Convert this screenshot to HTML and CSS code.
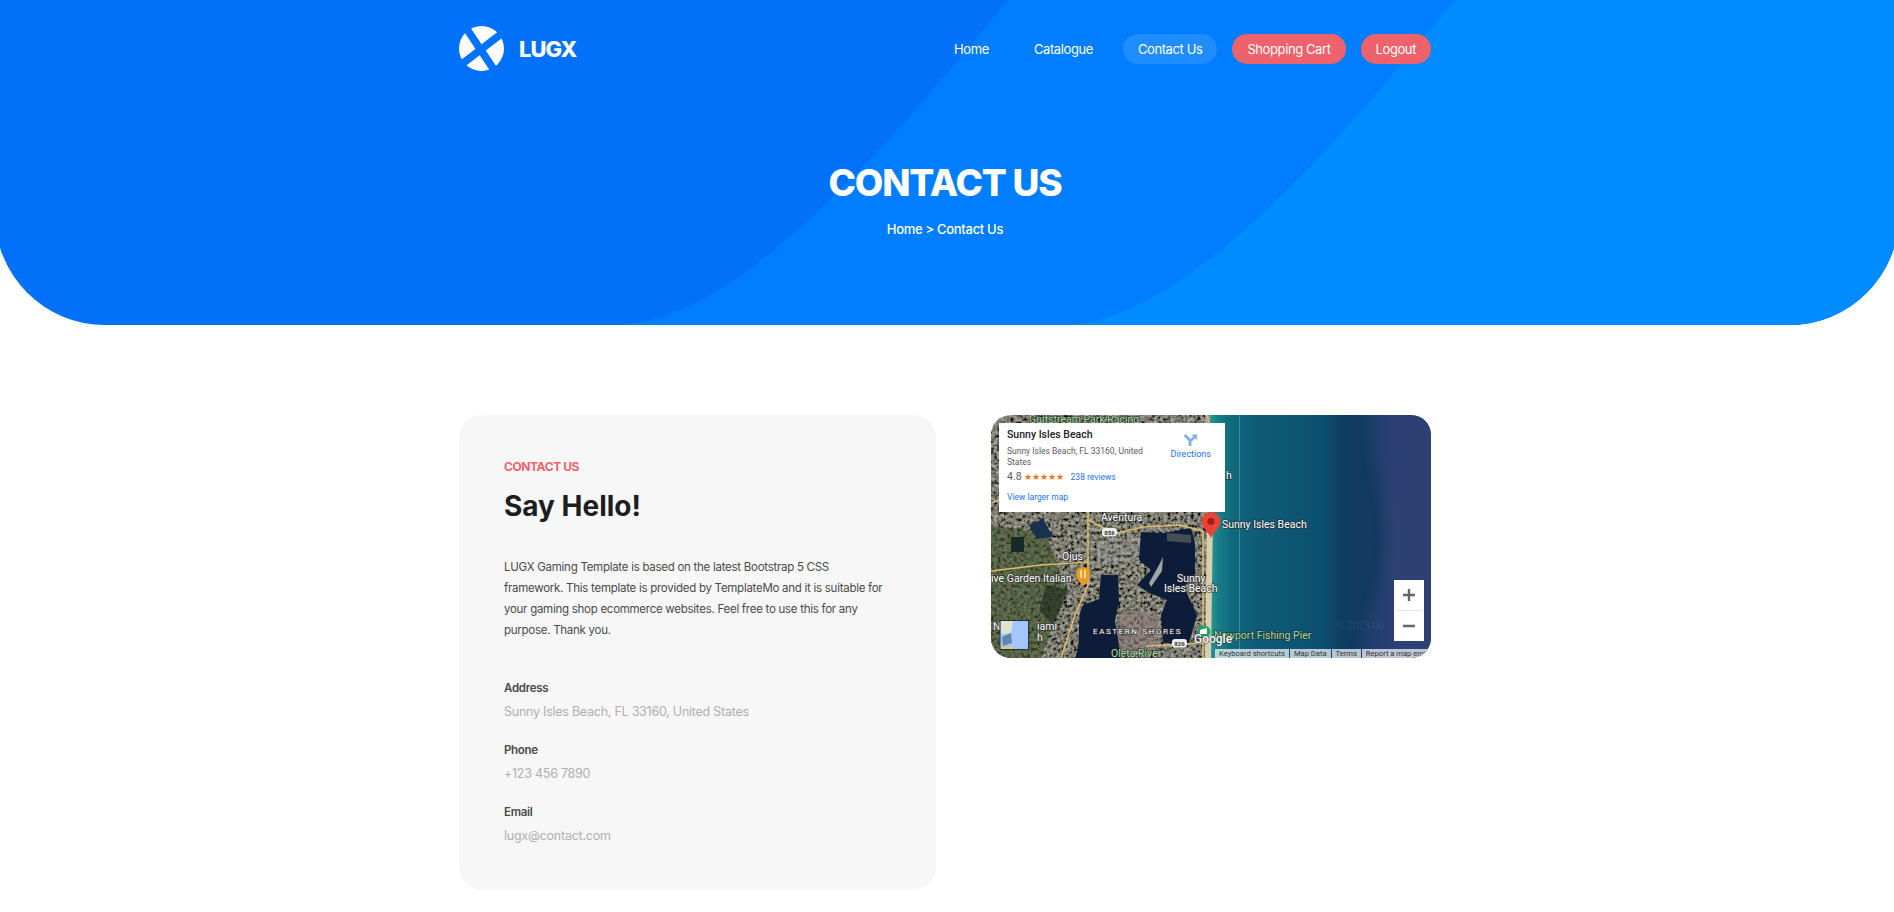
FILE: index.html
```html
<!DOCTYPE html>
<html lang="en">
<head>
    <meta charset="UTF-8">
    <meta name="viewport" content="width=device-width, initial-scale=1.0">
    <title>LUGX Gaming - Contact Us</title>
    <link rel="stylesheet" href="styles.css">
</head>
<body>

    <header class="hero">
        <!-- background swooshes -->
        <svg class="hero-shapes" viewBox="-5 0 1904 325" preserveAspectRatio="none" aria-hidden="true">
            <path fill="#007eff" d="M1008 0 C 924 100 748 325 616 325 L 1899 325 L 1899 0 Z"/>
            <path fill="#008cff" d="M1455 0 C 1371 100 1195 325 1063 325 L 1899 325 L 1899 0 Z"/>
        </svg>

        <div class="wrap">
            <nav class="topbar">
                <a class="logo" href="#">
                    <svg class="logo-mark" viewBox="0 0 44 44" aria-hidden="true">
                        <circle cx="22" cy="22" r="22" fill="#fff"/>
                        <path d="M5 -1 L 37 47 M 50 1 L -6 44" stroke="#0072fd" stroke-width="7.5" fill="none"/>
                    </svg>
                    <span class="logo-text">LUGX</span>
                </a>
                <ul class="menu">
                    <li><a href="#">Home</a></li>
                    <li><a href="#">Catalogue</a></li>
                    <li><a class="active" href="#">Contact Us</a></li>
                    <li><a class="red" href="#">Shopping Cart</a></li>
                    <li><a class="red" href="#">Logout</a></li>
                </ul>
            </nav>

            <div class="page-title">
                <h1>CONTACT US</h1>
                <p>Home &gt; Contact Us</p>
            </div>
        </div>
    </header>

    <main class="wrap contact">
        <section class="card">
            <h6>CONTACT US</h6>
            <h2>Say Hello!</h2>
            <p class="intro">LUGX Gaming Template is based on the latest Bootstrap 5 CSS framework. This template is provided by TemplateMo and it is suitable for your gaming shop ecommerce websites. Feel free to use this for any purpose. Thank you.</p>
            <ul class="details">
                <li><span>Address</span>Sunny Isles Beach, FL 33160, United States</li>
                <li><span>Phone</span>+123 456 7890</li>
                <li><span>Email</span>lugx@contact.com</li>
            </ul>
        </section>

        <section class="map">
            <svg class="map-art" viewBox="0 0 440 243" aria-hidden="true">
                <defs>
                    <linearGradient id="sea" x1="0" x2="1" y1="0" y2="0">
                        <stop offset="0" stop-color="#2a9d94"/>
                        <stop offset="0.04" stop-color="#178088"/>
                        <stop offset="0.1" stop-color="#0f6a7c"/>
                        <stop offset="0.2" stop-color="#0f5c78"/>
                        <stop offset="0.52" stop-color="#0c4f70"/>
                        <stop offset="0.6" stop-color="#0f3c60"/>
                        <stop offset="0.76" stop-color="#153a62"/>
                        <stop offset="0.84" stop-color="#2f4070"/>
                        <stop offset="1" stop-color="#373f6c"/>
                    </linearGradient>
                    <filter id="grain" x="0" y="0" width="100%" height="100%">
                        <feTurbulence type="fractalNoise" baseFrequency="0.3" numOctaves="3" seed="11"/>
                        <feColorMatrix values="1.5 0 0 0 -0.42  1.45 0 0 0 -0.41  1.25 0 0 0 -0.36  0 0 0 0 1"/>
                    </filter>
                    <filter id="soft">
                        <feGaussianBlur stdDeviation="6"/>
                    </filter>
                    <filter id="edge">
                        <feGaussianBlur stdDeviation="0.6"/>
                    </filter>
                </defs>

                <rect x="218" width="222" height="243" fill="url(#sea)"/>
                <path fill="#2b4378" opacity="0.6" filter="url(#soft)" d="M378 -20 L460 -20 L460 263 L368 263 C 374 190 392 175 396 130 C 398 90 376 50 378 -20 Z"/>
                <rect x="248" width="1" height="243" fill="#7fb6bb" opacity="0.45"/>

                <!-- land -->
                <rect width="219" height="243" filter="url(#grain)"/>
                <rect width="219" height="243" fill="#33362f" opacity="0.3"/>
                <path fill="#3c5226" opacity="0.6" d="M0 110 L55 118 L75 175 L50 243 L0 243 Z"/>
                <path fill="#142318" opacity="0.55" d="M55 170 L78 175 L62 210 L48 195 Z"/>
                <path fill="#8d7b78" opacity="0.55" d="M128 196 L168 196 L168 235 L122 238 Z"/>
                <path fill="#9a9ea3" opacity="0.3" d="M106 125 L150 125 L148 148 L106 150 Z"/>

                <!-- water -->
                <g filter="url(#edge)">
                    <path fill="#0d1d38" d="M150 117 L172 118 L200 113 L204 128 L204 160 L193 172 L206 200 L198 228 L172 228 L170 200 L176 185 L158 178 L146 170 L160 155 L148 145 Z"/>
                    <path fill="#0d1d38" d="M92 190 L108 184 L110 160 L127 160 L128 186 L124 206 L130 243 L84 243 C 92 225 84 205 92 190 Z"/>
                    <path fill="#16304f" d="M38 110 L52 104 L62 122 L46 124 Z"/>
                    <rect x="20" y="122" width="13" height="15" fill="#142a2c"/>
                    <path fill="#9ba5a3" d="M168 150 L172 142 L171 156 L160 172 L158 168 Z"/>
                    <path fill="#7e7f76" d="M176 118 L200 120 L200 128 L176 126 Z" opacity="0.5"/>
                </g>

                <!-- shore -->
                <path fill="#d9cfae" d="M216 100 L222 100 L221 170 L220 243 L214 243 Z"/>
                <rect x="214" width="5" height="97" fill="#b7b196" opacity="0.7"/>

                <!-- roads -->
                <g fill="none" stroke="#dcbb6c" stroke-width="1.6">
                    <path d="M97 105 L111 112 L126 118 L152 112 L189 110 L212 116 L212 243"/>
                    <path d="M0 156 L50 150 L97 147 L97 170 L84 200 L70 243"/>
                    <path d="M97 97 L97 147"/>
                    <path d="M155 231 L212 228"/>
                    <path d="M216 0 L218 10"/>
                    <path d="M0 88 L10 84"/>
                </g>

                <!-- labels -->
                <g class="lbl">
                    <text x="110" y="106">Aventura</text>
                    <text x="231" y="113">Sunny Isles Beach</text>
                    <text x="71" y="145">Ojus</text>
                    <text x="0" y="167">ive Garden Italian</text>
                    <text x="186" y="167">Sunny</text>
                    <text x="173" y="177">Isles Beach</text>
                    <text x="2" y="215">N</text>
                    <text x="46" y="215">iami</text>
                    <text x="46" y="226">h</text>
                    <text x="235" y="64">h</text>
                    <text class="lbl-caps" x="102" y="219">EASTERN SHORES</text>
                    <text class="lbl-green" x="38" y="8">Gulfstream Park Racing</text>
                    <text class="lbl-green" x="223" y="224">Newport Fishing Pier</text>
                    <text class="lbl-green" x="120" y="242">Oleta River</text>
                    <text class="lbl-copy" x="346" y="214">© 2023 Go</text>
                </g>

                <!-- road shields -->
                <rect x="111" y="113" width="15" height="8.5" rx="3" fill="#eee"/>
                <text class="shield" x="118.5" y="119.5">856</text>
                <rect x="181" y="224" width="15" height="8.5" rx="3" fill="#eee"/>
                <text class="shield" x="188.5" y="230.5">826</text>

                <!-- map pins -->
                <path fill="#ea4335" d="M220 123 C 217 116 210.5 113 210.5 106.5 A 9.5 9.5 0 0 1 229.5 106.5 C 229.5 113 223 116 220 123 Z"/>
                <circle cx="220" cy="106.5" r="3.6" fill="#a51d1d"/>
                <path fill="#f09a1a" d="M92 172 C 90 167 85 164 85 159 A 7 7 0 0 1 99 159 C 99 164 94 167 92 172 Z"/>
                <path d="M90 155 V163 M94 155 V163" stroke="#fff" stroke-width="1.3"/>
                <circle cx="213" cy="217" r="6.5" fill="#1ea362"/>
                <path fill="#fff" d="M209 215 L216 213 L216 219 L209 219 Z"/>

                <text class="gmark" x="203" y="228">Google</text>

                <!-- thumbnail -->
                <rect x="9" y="205.5" width="28.5" height="29" fill="#a2c8fb" stroke="#2a2f38" stroke-width="1"/>
                <path fill="#dfe3cc" d="M10 206 L22 206 L20 218 L10 219 Z"/>
                <path fill="#5f87ad" d="M11 222 L20 218 L21 228 L12 231 Z"/>
                <path fill="#e9c675" d="M10 232 L22 232 L22 234 L10 234 Z"/>
            </svg>

            <div class="map-info">
                <div class="info-main">
                    <strong>Sunny Isles Beach</strong>
                    <p>Sunny Isles Beach, FL 33160, United States</p>
                    <div class="rating">
                        <b>4.8</b><i>★★★★★</i><a href="#">238 reviews</a>
                    </div>
                    <a class="larger" href="#">View larger map</a>
                </div>
                <a class="directions" href="#">
                    <svg viewBox="0 0 16 16" width="15" height="15" aria-hidden="true">
                        <path fill="#7db0f0" d="M6 15 V9.6 L0.8 4.2 L2.8 2.2 L8 7.4 L11 4.6 L9 2.6 H15 V8.6 L13 6.6 L9 10.4 V15 Z"/>
                    </svg>
                    Directions
                </a>
            </div>

            <div class="zoom-ctrl">
                <span class="zoom-btn">
                    <svg viewBox="0 0 14 14" width="14" height="14" aria-hidden="true"><path d="M1 7 H13 M7 1 V13" stroke="#666" stroke-width="2.4"/></svg>
                </span>
                <span class="zoom-sep"></span>
                <span class="zoom-btn">
                    <svg viewBox="0 0 14 14" width="14" height="14" aria-hidden="true"><path d="M1 7 H13" stroke="#666" stroke-width="2.4"/></svg>
                </span>
            </div>

            <div class="map-foot">
                <span>Keyboard shortcuts</span>
                <span>Map Data</span>
                <span>Terms</span>
                <span>Report a map error</span>
            </div>
        </section>
    </main>

</body>
</html>
```

FILE: styles.css
```css
* {
    box-sizing: border-box;
}
body {
    margin: 0;
    background-color: #fff;
    font-family: "Inter", "Open Sans", sans-serif;
    color: #4a4a4a;
    overflow-x: hidden;
}
ul {
    list-style: none;
    margin: 0;
    padding: 0;
}
a {
    color: inherit;
    text-decoration: none;
}
.wrap {
    width: 972px;
    margin-left: 459px;
}

/* header */
.hero {
    position: relative;
    height: 325px;
    margin: 0 -5px;
    background-color: #0071f8;
    border-radius: 0 0 110px 110px;
    overflow: hidden;
    color: #fff;
}
.hero-shapes {
    position: absolute;
    inset: 0;
    width: 100%;
    height: 100%;
}
.hero .wrap {
    position: relative;
    margin-left: 464px;
}
.topbar {
    display: flex;
    justify-content: space-between;
    align-items: flex-start;
    padding-top: 26px;
}
.logo {
    display: flex;
    align-items: center;
    gap: 15px;
}
.logo-mark {
    width: 45px;
    height: 45px;
}
.logo-text {
    font-size: 22px;
    font-weight: 800;
    letter-spacing: -1px;
}
.menu {
    display: flex;
    gap: 15px;
    margin-top: 8px;
}
.menu a {
    display: block;
    height: 30px;
    line-height: 30px;
    padding: 0 15px;
    border-radius: 15px;
    font-size: 13px;
    letter-spacing: -0.4px;
}
.menu a.active {
    background-color: rgba(255,255,255,0.12);
}
.menu a.red {
    background-color: #ee626b;
}
.page-title {
    margin-top: 88px;
    text-align: center;
}
.page-title h1 {
    margin: 0;
    font-size: 37px;
    line-height: 48px;
    font-weight: 800;
    letter-spacing: -1.2px;
}
.page-title p {
    margin: 12px 0 0;
    font-size: 13px;
    font-weight: 500;
    line-height: 20px;
    letter-spacing: -0.3px;
}

/* content */
.contact {
    display: flex;
    align-items: flex-start;
    gap: 55px;
    padding-top: 90px;
}
.card {
    width: 477px;
    height: 475px;
    padding: 44px 45px;
    background-color: #f7f7f7;
    border-radius: 23px;
}
.card h6 {
    margin: 0;
    font-size: 12px;
    line-height: 15px;
    font-weight: 700;
    letter-spacing: -0.4px;
    color: #ee626b;
}
.card h2 {
    margin: 12px 0 0;
    font-size: 28px;
    line-height: 40px;
    font-weight: 700;
    color: #1e1e1e;
}
.intro {
    margin: 31px 0 0;
    font-size: 11.5px;
    line-height: 21px;
    letter-spacing: -0.27px;
    color: #4a4a4a;
}
.details {
    margin-top: 37px;
}
.details li {
    margin-bottom: 18px;
    font-size: 12.5px;
    line-height: 20px;
    letter-spacing: -0.25px;
    color: #afafaf;
}
.details span {
    display: block;
    margin-bottom: 4px;
    font-size: 11.5px;
    line-height: 20px;
    font-weight: 600;
    letter-spacing: -0.3px;
    color: #4a4a4a;
}

/* map */
.map {
    position: relative;
    width: 440px;
    height: 243px;
    border-radius: 20px;
    overflow: hidden;
    font-family: "Roboto", sans-serif;
}
.map-art {
    display: block;
    width: 100%;
    height: 100%;
}
.lbl text {
    font-family: "Roboto", sans-serif;
    font-size: 10.5px;
    fill: #fff;
    stroke: #2a2a2a;
    stroke-width: 1.6px;
    stroke-opacity: 0.7;
    paint-order: stroke;
}
.lbl .lbl-caps {
    font-size: 8px;
    letter-spacing: 1.6px;
}
.lbl .lbl-green {
    fill: #9fdc9f;
}
.lbl .lbl-copy {
    fill: #fff;
    stroke: none;
    opacity: 0.07;
    font-size: 10px;
}
.shield {
    font-size: 6px;
    font-weight: 700;
    text-anchor: middle;
    fill: #333;
}
.gmark {
    font-family: "Roboto", sans-serif;
    font-size: 12px;
    font-weight: 500;
    fill: #fff;
    stroke: #333;
    stroke-width: 1px;
    paint-order: stroke;
}
.map-info {
    position: absolute;
    left: 8px;
    top: 8px;
    width: 226px;
    height: 89px;
    padding: 5px 8px;
    display: flex;
    justify-content: space-between;
    background-color: #fff;
    font-size: 8.5px;
    color: #5b5b5b;
}
.info-main {
    width: 148px;
}
.info-main strong {
    display: block;
    font-size: 10.5px;
    line-height: 13px;
    font-weight: 500;
    color: #202124;
}
.info-main p {
    margin: 5px 0 0;
    line-height: 11px;
}
.rating {
    display: flex;
    align-items: center;
    gap: 1px;
    margin-top: 2px;
    height: 13px;
}
.rating b {
    font-size: 10.5px;
    font-weight: 400;
}
.rating i {
    margin: 0 6px 0 1px;
    font-style: normal;
    font-size: 9px;
    color: #e7711b;
}
.rating a,
.larger,
.directions {
    color: #1a73e8;
}
.larger {
    display: block;
    margin-top: 9px;
}
.directions {
    display: flex;
    flex-direction: column;
    align-items: center;
    gap: 2px;
    margin: 4px 6px 0 0;
    font-size: 9px;
}
.zoom-ctrl {
    position: absolute;
    left: 403px;
    top: 165px;
    width: 30px;
    height: 61px;
    padding: 0 3px;
    background-color: #fff;
}
.zoom-btn {
    display: flex;
    align-items: center;
    justify-content: center;
    height: 30px;
}
.zoom-sep {
    display: block;
    height: 1px;
    background-color: #e6e6e6;
}
.map-foot {
    position: absolute;
    left: 224px;
    right: 0;
    bottom: 0;
    height: 9px;
    display: flex;
    gap: 1px;
    font-size: 7.6px;
    line-height: 9px;
    color: #333;
    white-space: nowrap;
}
.map-foot span {
    flex: none;
    padding: 0 4px;
    background-color: rgba(255,255,255,0.7);
}
```
